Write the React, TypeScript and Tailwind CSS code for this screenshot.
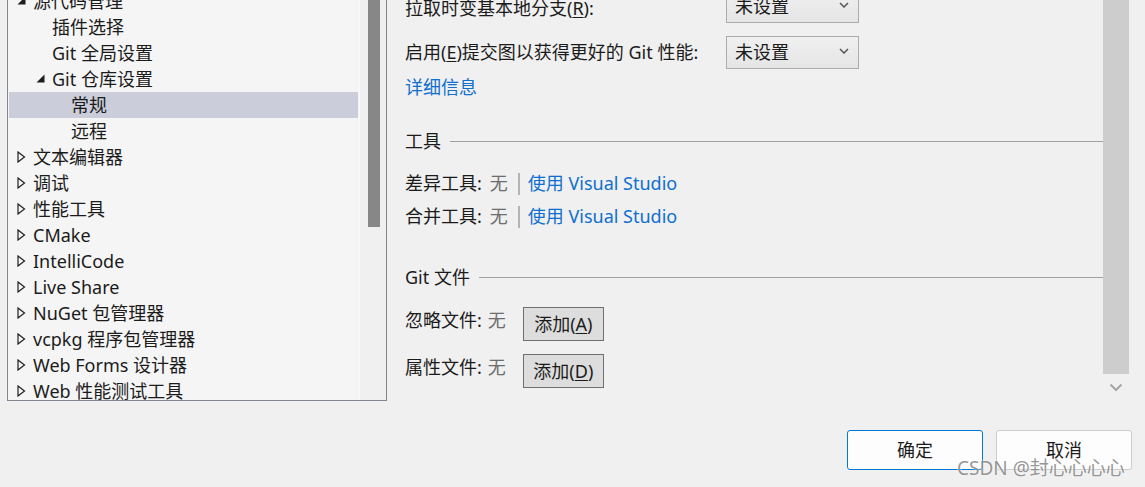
import React from "react";

type TreeNode = {
  label: string;
  level: number;
  state?: "open" | "closed";
  selected?: boolean;
};

const TREE: TreeNode[] = [
  { label: "源代码管理", level: 0, state: "open" },
  { label: "插件选择", level: 1 },
  { label: "Git 全局设置", level: 1 },
  { label: "Git 仓库设置", level: 1, state: "open" },
  { label: "常规", level: 2, selected: true },
  { label: "远程", level: 2 },
  { label: "文本编辑器", level: 0, state: "closed" },
  { label: "调试", level: 0, state: "closed" },
  { label: "性能工具", level: 0, state: "closed" },
  { label: "CMake", level: 0, state: "closed" },
  { label: "IntelliCode", level: 0, state: "closed" },
  { label: "Live Share", level: 0, state: "closed" },
  { label: "NuGet 包管理器", level: 0, state: "closed" },
  { label: "vcpkg 程序包管理器", level: 0, state: "closed" },
  { label: "Web Forms 设计器", level: 0, state: "closed" },
  { label: "Web 性能测试工具", level: 0, state: "closed" },
];

const FONT = { fontFamily: '"Noto Sans", "Noto Sans CJK SC", sans-serif' };

const INDENT = ["w-[9px]", "w-[28px]", "w-[47px]"];

function Expander({ state }: { state?: "open" | "closed" }) {
  if (state === "closed") {
    return (
      <svg width="9" height="12" viewBox="0 0 9 12" className="shrink-0">
        <path d="M1 1 L7.5 6 L1 11 Z" fill="none" stroke="#1e1e1e" strokeWidth="1.2" />
      </svg>
    );
  }
  if (state === "open") {
    return (
      <svg width="9" height="9" viewBox="0 0 9 9" className="shrink-0 -mt-[1px]">
        <path d="M8.5 0.5 L8.5 8.5 L0.5 8.5 Z" fill="#1e1e1e" />
      </svg>
    );
  }
  return null;
}

function TreeRow({ node }: { node: TreeNode }) {
  return (
    <div
      className={
        "flex h-[26px] items-center whitespace-nowrap text-[18px] text-[#1b1b1b] " +
        (node.selected ? "mx-[1px] bg-[#cbcdda]" : "")
      }
    >
      <span className={"shrink-0 " + INDENT[node.level] + (node.selected ? " -ml-[1px]" : "")} />
      <span className="flex w-[16px] shrink-0 items-center">
        <Expander state={node.state} />
      </span>
      <span>{node.label}</span>
    </div>
  );
}

function Select() {
  return (
    <div className="flex h-[33px] w-[133px] items-center justify-between border border-[#acacac] bg-gradient-to-b from-[#f0f0f0] to-[#e5e5e5] pl-[8px] pr-[9px]">
      <span>未设置</span>
      <svg width="10" height="6" viewBox="0 0 10 6" className="-mt-[3px]">
        <path d="M1 1 L5 5 L9 1" fill="none" stroke="#555" strokeWidth="1.5" />
      </svg>
    </div>
  );
}

function SectionHeader({ title }: { title: string }) {
  return (
    <div className="flex h-[24px] items-center">
      <span className="leading-[24px]">{title}</span>
      <span className="ml-[9px] mt-[1px] h-px flex-1 bg-[#a0a0a0]" />
    </div>
  );
}

function ToolRow({ label }: { label: string }) {
  return (
    <div className="flex h-[33px] items-center">
      <span>{label}:</span>
      <span className="ml-2 text-[#6d6d6d]">无</span>
      <span className="ml-[10px] h-[22px] w-[2px] bg-[#b4b4b4]" />
      <span className="ml-[8px] text-[#0f6fcf]">使用 Visual Studio</span>
    </div>
  );
}

function FileRow({ label, accel }: { label: string; accel: string }) {
  return (
    <div className="flex h-[34px] items-start">
      <span className="mt-[1px] leading-[24px]">{label}:</span>
      <span className="ml-[6px] mt-[1px] leading-[24px] text-[#6d6d6d]">无</span>
      <button className="ml-[17px] flex h-[34px] w-[81px] items-center justify-center border border-[#707070] bg-[#dddddd] text-[18px] text-[#1b1b1b]">
        添加(<span className="underline underline-offset-2">{accel}</span>)
      </button>
    </div>
  );
}

export default function App() {
  return (
    <div
      className="relative flex h-[487px] w-[1145px] flex-col overflow-hidden bg-[#f0f0f0] text-[18px] text-[#1b1b1b]"
      style={FONT}
    >
      <div className="flex h-[401px]">
        {/* options tree */}
        <div className="ml-[7px] flex h-[401px] w-[380px] shrink-0 border-x border-b border-[#828790]">
          <div className="h-full w-[351px] overflow-hidden bg-[#f5f5f5]">
            <div className="-mt-[12px]">
              {TREE.map((node) => (
                <TreeRow key={node.label} node={node} />
              ))}
            </div>
          </div>
          <div className="h-full w-px bg-[#fafafa]" />
          <div className="flex h-full flex-1 justify-center bg-[#f0f0f0]">
            <div className="ml-[1px] h-[227px] w-[12px] bg-[#878787]" />
          </div>
        </div>

        {/* settings page */}
        <div className="flex min-w-0 flex-1 flex-col overflow-hidden pl-[18px]">
          <div className="-mt-[10px] flex flex-col">
            <div className="flex h-[33px] items-center">
              <span className="w-[321px] shrink-0 pt-[3px]">
                拉取时变基本地分支(<span className="underline underline-offset-2">R</span>):
              </span>
              <Select />
            </div>
            <div className="mt-[13px] flex h-[33px] items-center">
              <span className="w-[321px] shrink-0">
                启用(<span className="underline underline-offset-2">E</span>)提交图以获得更好的 Git 性能:
              </span>
              <Select />
            </div>
            <a className="mt-[6px] h-[24px] w-fit leading-[24px] text-[#0f6fcf]">详细信息</a>

            <div className="mt-[30px]">
              <SectionHeader title="工具" />
            </div>
            <div className="mt-[14px]">
              <ToolRow label="差异工具" />
              <ToolRow label="合并工具" />
            </div>

            <div className="mt-[32px]">
              <SectionHeader title="Git 文件" />
            </div>
            <div className="mt-[18px]">
              <FileRow label="忽略文件" accel="A" />
            </div>
            <div className="mt-[13px]">
              <FileRow label="属性文件" accel="D" />
            </div>
          </div>
        </div>

        {/* page scrollbar */}
        <div className="mr-[16px] flex w-[26px] shrink-0 flex-col items-center">
          <div className="h-[374px] w-full bg-[#cdcdcd]" />
          <svg width="14" height="9" viewBox="0 0 14 9" className="mt-[9px]">
            <path d="M1.5 1.5 L7 7 L12.5 1.5" fill="none" stroke="#a6a6a6" strokeWidth="2" />
          </svg>
        </div>
      </div>

      {/* dialog buttons */}
      <div className="mt-[29px] flex justify-end gap-[13px] pr-[13px]">
        <button className="flex h-[40px] w-[136px] items-center justify-center rounded-[3px] border border-[#0078d4] bg-[#fdfdfd] text-[18px] text-[#1b1b1b]">
          确定
        </button>
        <button className="flex h-[40px] w-[136px] items-center justify-center rounded-[3px] border border-[#cccccc] bg-[#fdfdfd] text-[18px] text-[#1b1b1b]">
          取消
        </button>
      </div>

      {/* watermark */}
      <div className="pointer-events-none absolute left-[957px] top-[454px] text-[19px] text-[#7a7a7a]/80 [text-shadow:0_0_2px_#ffffff]">
        CSDN @封心心心心
      </div>
    </div>
  );
}
